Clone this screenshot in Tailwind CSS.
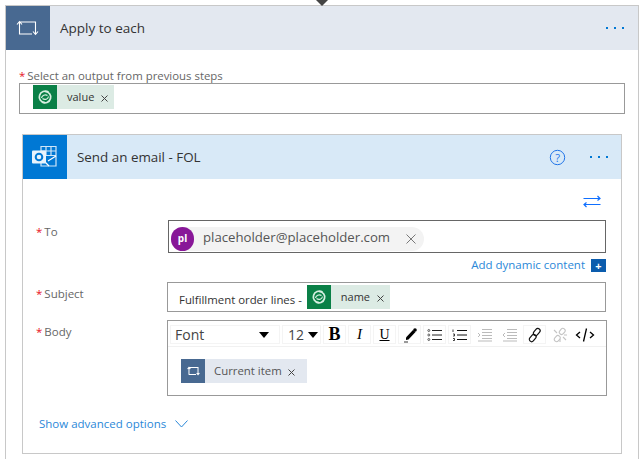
<!DOCTYPE html>
<html lang="en">
<head>
    <meta charset="UTF-8">
    <title>Apply to each</title>
    <script src="https://cdn.jsdelivr.net/npm/@tailwindcss/browser@4"></script>
</head>
<body class="h-[459px] overflow-hidden bg-white font-['Open_Sans','Noto_Sans',sans-serif] text-[#333]">
    <div class="relative pt-[5px] pl-[5px]">
        <svg class="absolute left-[316px] top-0" width="12" height="6" viewBox="0 0 12 6"><path d="M0 0h12L6 6z" fill="#444"/></svg>

        <div class="w-[634px] h-[470px] border border-[#c8c8c8]">
            <div class="flex items-center h-[44px] bg-[#e3e8f0]">
                <div class="flex items-center justify-center w-[44px] h-[44px] bg-[#486991]">
                    <svg class="mr-[2px]" width="23" height="16" viewBox="0 0 23 16" fill="none" stroke="#fff" stroke-width="1.1"><path d="M3.5 14.5V2H19.5V14M1 4.5L3.5 1.5L6 4.5M17 11.5L19.5 14.5L22 11.5M3.5 14H16"/></svg>
                </div>
                <span class="ml-[10px] text-[13.5px] text-[#333]">Apply to each</span>
                <div class="ml-auto mr-[14px] flex gap-[6px]">
                    <i class="w-[2px] h-[2px] bg-[#0078d4]"></i><i class="w-[2px] h-[2px] bg-[#0078d4]"></i><i class="w-[2px] h-[2px] bg-[#0078d4]"></i>
                </div>
            </div>

            <div class="pl-[13px] pt-[18px] h-[20px] text-[11.4px] leading-[15px] text-[#666]"><span class="mr-[2px] text-[#e81123]">*</span>Select an output from previous steps</div>
            <div class="ml-[13px] mt-[13px] w-[606px] h-[31px] border border-[#999] pl-[13px] pt-[1px]">
                <div class="inline-flex items-center h-[24px] bg-[#dcebe4]">
                    <span class="flex items-center justify-center w-[24px] h-[24px] bg-[#0a8047]">
                        <svg width="16" height="16" viewBox="0 0 16 16" fill="none" stroke="#d8efe2" stroke-width="1.7"><path d="M11.5 3C8 1 3.5 2.5 2.5 6.5C1.5 10 4 13.5 8 13.5"/><path d="M5 13C8 15 12.5 13.5 13.5 9.5C14.5 6 12 2.5 8 2.5"/><path d="M4.5 9C5 6.5 8 5 10.5 6.5M11.5 7.5C11 10 8 11.5 5.5 9.5" stroke-width="1.2"/></svg>
                    </span>
                    <span class="ml-[10px] text-[11px] text-[#333]">value</span>
                    <svg class="ml-[7px] mr-[6px] mt-[2px]" width="7" height="7" viewBox="0 0 7 7" stroke="#444"><path d="M0.5 0.5L6.5 6.5M6.5 0.5L0.5 6.5"/></svg>
                </div>
            </div>

            <div class="ml-[16px] mt-[20px] w-[600px] h-[320px] border border-[#c8c8c8]">
                <div class="flex items-center h-[44px] bg-[#d8e9f7]">
                    <div class="flex items-center justify-center w-[44px] h-[44px] bg-[#0078d4]">
                        <svg width="28" height="26" viewBox="0 0 28 26" fill="none">
                            <path d="M10 2.5H25V22H10z" stroke="#cfe6f8" stroke-width="1.2"/>
                            <path d="M15 2.5V12M20 2.5V12M10 7H25M10 11.5H25" stroke="#cfe6f8" stroke-width="1.2"/>
                            <path d="M10 14L18 22M25 12L17 17" stroke="#fff" stroke-width="1.2"/>
                            <rect x="1" y="6.5" width="14" height="13" rx="1" fill="#e8f3fc"/>
                            <circle cx="8" cy="13" r="3.3" stroke="#0078d4" stroke-width="2"/>
                        </svg>
                    </div>
                    <span class="ml-[10px] text-[13.4px] text-[#333]">Send an email - FOL</span>
                    <svg class="ml-auto mr-[1px]" width="17" height="17" viewBox="0 0 17 17" fill="none"><circle cx="8.5" cy="8.5" r="7.2" stroke="#1f74e8" stroke-width="1"/><text x="8.5" y="12.5" text-anchor="middle" font-size="11" fill="#1f74e8">?</text></svg>
                    <div class="ml-[23px] mr-[13px] flex gap-[6px]">
                        <i class="w-[2px] h-[2px] bg-[#0078d4]"></i><i class="w-[2px] h-[2px] bg-[#0078d4]"></i><i class="w-[2px] h-[2px] bg-[#0078d4]"></i>
                    </div>
                </div>

                <div class="flex justify-end pt-[16px] pr-[20px] h-[41px]">
                    <svg width="18" height="13" viewBox="0 0 18 13" fill="none" stroke="#0f6fff" stroke-width="1.2"><path d="M0.5 3.5H16.5M14.5 1L17 3.5L14.5 5.5M17.5 9.5H1.5M3.5 7.5L1 9.5L3.5 12"/></svg>
                </div>

                <div class="flex pl-[13px]">
                    <div class="w-[132px] pt-[3px] text-[11.5px] leading-[18px] text-[#666]"><span class="mr-[2px] text-[#e81123]">*</span>To</div>
                    <div class="w-[438px] h-[33px] border border-[#666] pl-[2px] pt-[3px]">
                        <div class="inline-flex items-center w-[253px] h-[24px] rounded-full bg-[#f3f3f3]">
                            <span class="flex items-center justify-center w-[23px] h-[24px] rounded-full bg-[#881798] text-[10px] font-bold text-white">pl</span>
                            <span class="ml-[9px] mb-[2px] text-[13.2px] text-[#555]">placeholder@placeholder.com</span>
                            <svg class="ml-auto mr-[8px]" width="10" height="10" viewBox="0 0 10 10" stroke="#777" stroke-width="1"><path d="M0.5 0.5L9.5 9.5M9.5 0.5L0.5 9.5"/></svg>
                        </div>
                    </div>
                </div>
                <div class="flex items-center justify-end h-[24px] w-[583px]">
                    <span class="text-[11.5px] text-[#2b88d8]">Add dynamic content</span>
                    <span class="ml-[6px] flex items-center justify-center w-[15px] h-[13px] bg-[#0b5cad] text-[11px] font-bold leading-none text-white">+</span>
                </div>

                <div class="flex pl-[13px] mt-[5px]">
                    <div class="w-[131px] pt-[3px] text-[11.5px] leading-[18px] text-[#666]"><span class="mr-[2px] text-[#e81123]">*</span>Subject</div>
                    <div class="flex items-center w-[439px] h-[30px] border border-[#999] pl-[11px]">
                        <span class="mt-[6px] text-[11.4px] text-[#333]">Fulfillment order lines -</span>
                        <div class="ml-[5px] inline-flex items-center h-[24px] bg-[#dcebe4]">
                            <span class="flex items-center justify-center w-[24px] h-[24px] bg-[#0a8047]">
                                <svg width="16" height="16" viewBox="0 0 16 16" fill="none" stroke="#d8efe2" stroke-width="1.7"><path d="M11.5 3C8 1 3.5 2.5 2.5 6.5C1.5 10 4 13.5 8 13.5"/><path d="M5 13C8 15 12.5 13.5 13.5 9.5C14.5 6 12 2.5 8 2.5"/><path d="M4.5 9C5 6.5 8 5 10.5 6.5M11.5 7.5C11 10 8 11.5 5.5 9.5" stroke-width="1.2"/></svg>
                            </span>
                            <span class="ml-[10px] text-[11px] text-[#333]">name</span>
                            <svg class="ml-[7px] mr-[6px] mt-[2px]" width="7" height="7" viewBox="0 0 7 7" stroke="#444"><path d="M0.5 0.5L6.5 6.5M6.5 0.5L0.5 6.5"/></svg>
                        </div>
                    </div>
                </div>

                <div class="flex pl-[13px] mt-[8px]">
                    <div class="w-[131px] pt-[3px] text-[11.5px] leading-[18px] text-[#666]"><span class="mr-[2px] text-[#e81123]">*</span>Body</div>
                    <div class="w-[440px] h-[76px] border border-[#999]">
                        <div class="flex items-center h-[26px] pt-[2px] pl-[2px] gap-[2px] border-b border-[#f1f1f1]">
                            <div class="flex items-center w-[110px] h-[19px] border border-[#f4f4f4] pl-[4px]">
                                <span class="text-[14px] text-[#444]">Font</span>
                                <i class="ml-auto mr-[10px] w-0 h-0 border-x-[5px] border-x-transparent border-t-[6px] border-t-black"></i>
                            </div>
                            <div class="flex items-center w-[39px] h-[19px] border border-[#f4f4f4] pl-[5px]">
                                <span class="text-[14px] text-[#444]">12</span>
                                <i class="ml-[4px] w-0 h-0 border-x-[5px] border-x-transparent border-t-[6px] border-t-black"></i>
                            </div>
                            <div class="flex items-center justify-center w-[23px] h-[19px] border border-[#f4f4f4] font-['Liberation_Serif',serif] text-[18px] leading-[19px] font-bold text-black">B</div>
                            <div class="flex items-center justify-center w-[23px] h-[19px] border border-[#f4f4f4] font-['Liberation_Serif',serif] text-[15px] italic text-black">I</div>
                            <div class="flex items-center justify-center w-[23px] h-[19px] border border-[#f4f4f4] font-['Liberation_Serif',serif] text-[14px] underline text-black">U</div>
                            <div class="flex items-center justify-center w-[23px] h-[19px] border border-[#f4f4f4]">
                                <svg width="16" height="16" viewBox="0 0 16 16"><path d="M4 10.5L11 3L13.5 5L6.5 12.5L4 13z" fill="#000"/><circle cx="13" cy="3" r="1.8" fill="#000"/><path d="M2 15H6" stroke="#000" stroke-width=".8"/></svg>
                            </div>
                            <div class="flex items-center justify-center w-[23px] h-[19px] border border-[#f4f4f4]">
                                <svg width="16" height="14" viewBox="0 0 16 14" fill="none" stroke="#222"><circle cx="1.8" cy="2.5" r="1" stroke-width=".7"/><circle cx="1.8" cy="7" r="1" stroke-width=".7"/><circle cx="1.8" cy="11.5" r="1" stroke-width=".7"/><path d="M5 2.5H15M5 7H15M5 11.5H15" stroke-width="1"/></svg>
                            </div>
                            <div class="flex items-center justify-center w-[23px] h-[19px] border border-[#f4f4f4]">
                                <svg width="16" height="14" viewBox="0 0 16 14" fill="none" stroke="#111"><path d="M1 1.5V4M1 6H2.5V8H1M1 10.5H2.5V12.5H1" stroke-width=".8"/><path d="M5 2.5H15M5 7H15M5 11.5H15" stroke-width="1.2"/></svg>
                            </div>
                            <div class="flex items-center justify-center w-[23px] h-[19px]">
                                <svg width="16" height="14" viewBox="0 0 16 14" fill="none" stroke="#bbb"><path d="M1 5L3 7L1 9" /><path d="M5 1.5H15M5 4.5H15M5 7.5H15M5 10.5H15M1 13H15"/></svg>
                            </div>
                            <div class="flex items-center justify-center w-[23px] h-[19px]">
                                <svg width="16" height="14" viewBox="0 0 16 14" fill="none" stroke="#bbb"><path d="M3 5L1 7L3 9" /><path d="M5 1.5H15M5 4.5H15M5 7.5H15M5 10.5H15M1 13H15"/></svg>
                            </div>
                            <div class="flex items-center justify-center w-[23px] h-[19px] border border-[#f4f4f4]">
                                <svg width="16" height="16" viewBox="0 0 16 16" fill="none" stroke="#111" stroke-width="1.2"><rect x="7.5" y="1" width="4.5" height="8" rx="2.2" transform="rotate(40 9.7 5)"/><rect x="3.5" y="7" width="4.5" height="8" rx="2.2" transform="rotate(40 5.7 11)"/></svg>
                            </div>
                            <div class="flex items-center justify-center w-[23px] h-[19px]">
                                <svg width="16" height="16" viewBox="0 0 16 16" fill="none" stroke="#c4c4c4" stroke-width="1.1"><rect x="7.5" y="1" width="4.5" height="6.5" rx="2.2" transform="rotate(40 9.7 5)"/><rect x="3.5" y="8.5" width="4.5" height="6.5" rx="2.2" transform="rotate(40 5.7 11)"/><path d="M2 3L5 6M11 10L14 13M12 8H15M8 12V15"/></svg>
                            </div>
                            <div class="flex items-center justify-center w-[23px] h-[19px]">
                                <svg width="20" height="16" viewBox="0 0 20 16" fill="none" stroke="#000" stroke-width="1.3"><path d="M5 5L1.5 8L5 11M15 5L18.5 8L15 11M11.5 1.5L8.5 14.5"/></svg>
                            </div>
                        </div>
                        <div class="ml-[13px] mt-[12px] inline-flex items-center w-[126px] h-[24px] bg-[#e3e8f0]">
                            <span class="flex items-center justify-center w-[24px] h-[24px] bg-[#486991]">
                                <svg width="13" height="10" viewBox="0 0 23 16" fill="none" stroke="#fff" stroke-width="1.8"><path d="M3.5 14.5V2H19.5V14M1 4.5L3.5 1.5L6 4.5M17 11.5L19.5 14.5L22 11.5M3.5 14H16"/></svg>
                            </span>
                            <span class="ml-[9px] text-[11.4px] text-[#555]">Current item</span>
                            <svg class="ml-[6px] mt-[3px]" width="7" height="7" viewBox="0 0 7 7" stroke="#444"><path d="M0.5 0.5L6.5 6.5M6.5 0.5L0.5 6.5"/></svg>
                        </div>
                    </div>
                </div>

                <div class="flex items-center pl-[16px] mt-[19px]">
                    <span class="text-[11.5px] text-[#2b88d8]">Show advanced options</span>
                    <svg class="ml-[9px]" width="13" height="8" viewBox="0 0 13 8" fill="none" stroke="#2b88d8"><path d="M0.5 0.5L6.5 7L12.5 0.5"/></svg>
                </div>
            </div>
        </div>
    </div>
</body>
</html>
